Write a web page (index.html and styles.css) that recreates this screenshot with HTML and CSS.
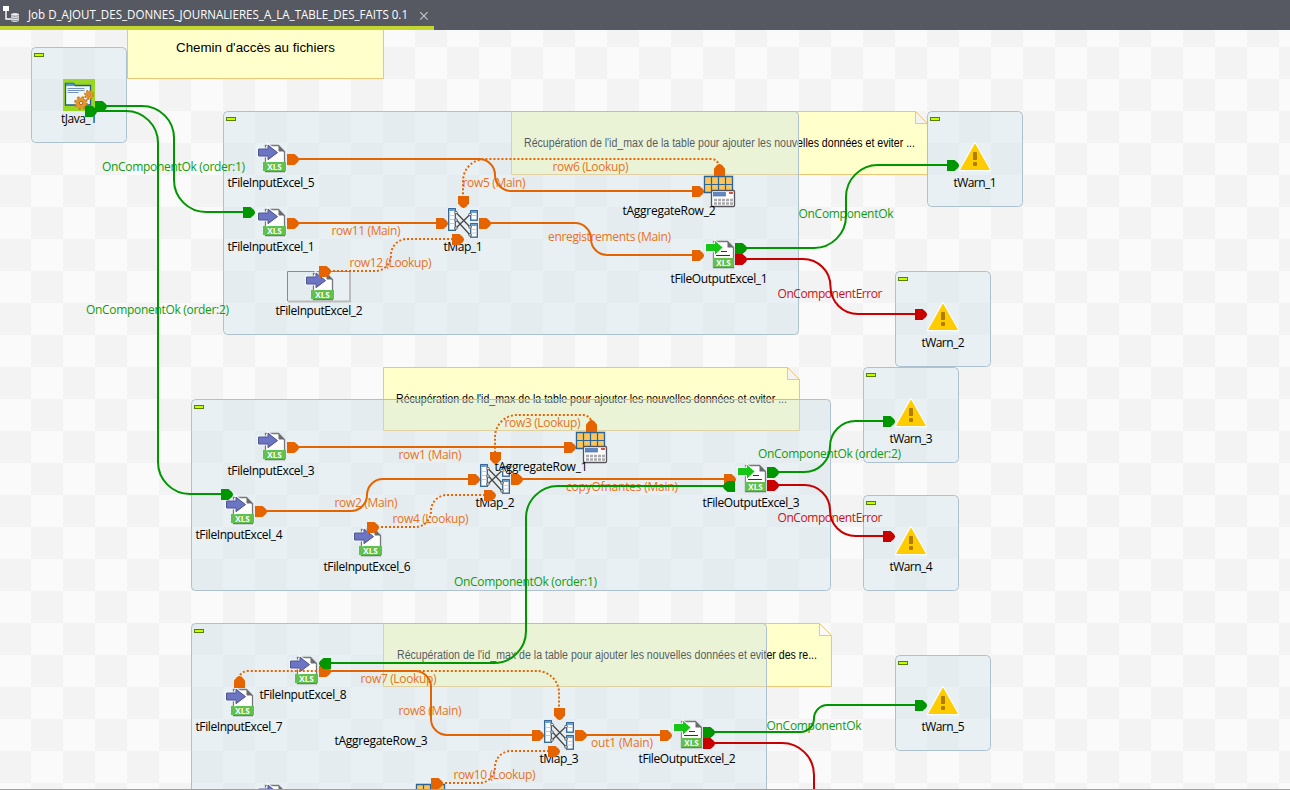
FILE: index.html
```html
<!DOCTYPE html>
<html lang="fr">
<head>
<meta charset="utf-8">
<title>Job D_AJOUT_DES_DONNES_JOURNALIERES_A_LA_TABLE_DES_FAITS 0.1</title>
<link rel="stylesheet" href="styles.css">
</head>
<body>
<header class="tabs">
  <div class="tab">
    <svg class="tab-icon" width="16" height="18" viewBox="0 0 16 18">
      <rect x="0" y="1" width="6" height="5" fill="#fff"/>
      <path d="M3 5v9h5" fill="none" stroke="#fff" stroke-width="1.4"/>
      <path d="M8 9q4-2 8 0v7q-4 2-8 0z" fill="#e8e8e8"/>
      <path d="M8 10.7q4 1.200 8 0M8 12.900q4 1.200 8 0M8 15.100q4 1.200 8 0" fill="none" stroke="#777a82" stroke-width=".8"/>
    </svg>
    <svg class="tab-title" width="386" height="26"><text x="0" y="19" textLength="380" lengthAdjust="spacingAndGlyphs">Job D_AJOUT_DES_DONNES_JOURNALIERES_A_LA_TABLE_DES_FAITS 0.1</text></svg>
    <svg class="tab-close" width="10" height="10" viewBox="0 0 10 10"><path d="M1.200 1.200l7.400 7.400M8.600 1.200L1.200 8.600" fill="none" stroke="#c8c9cc" stroke-width="1.100"/></svg>
  </div>
</header>
<main class="designer">
<svg class="canvas" width="1290" height="760" viewBox="0 30 1290 760">
  <defs>
    <pattern id="checker" x="-1" y="15" width="64" height="64" patternUnits="userSpaceOnUse">
      <rect width="64" height="64" fill="#fafafa"/>
      <path d="M32 0h32v32H32zM0 32h32v32H0z" fill="#f3f3f3"/>
    </pattern>
    <path id="plug" d="M-6-5.500H1.500L5 -2.500L6 -.5V.5L5 2.500L1.500 5.500H-6z"/>
    <g id="toggle"><rect x="3" y="6" width="9" height="3" fill="#bfff00" stroke="#5d7d00"/></g>
    <g id="xls-in">
      <path d="M10.500 2.500h13l6 6v20h-19z" fill="#fff" stroke="#77787a" stroke-width="1.300"/>
      <path d="M23.500 2.500v6h6z" fill="#6a6b6e"/>
      <rect x="8" y="19" width="23" height="9" fill="#62c14e"/>
      <text x="19.500" y="26.600" class="badge">XLS</text>
      <path d="M3.500 6h9.500V1.800L22.800 9.600L13 17.200V13H3.500z" fill="#6c75c2" stroke="#fff" stroke-width="3" stroke-opacity=".7"/>
      <path d="M3.500 6h9.500V2.300L22.500 9.600L13 16.700V13H3.500z" fill="#6c75c2" stroke="#4c5499"/>
    </g>
    <g id="xls-out">
      <path d="M10.500 2.500h14l6 6v20h-20z" fill="#fff" stroke="#77787a" stroke-width="1.300"/>
      <path d="M24.500 2.500v6h6z" fill="#6a6b6e"/>
      <path d="M18 12.500h6M13 16.500h14" stroke="#333" stroke-width="1.100"/>
      <rect x="10" y="19" width="21" height="9" fill="#62c14e"/>
      <text x="20.500" y="26.600" class="badge">XLS</text>
      <path d="M3 5h9V2L19.500 8.500L12 15.500V12H3z" fill="#16c516" stroke="#fff" stroke-width="2.500" stroke-opacity=".7"/>
      <path d="M3 5h9V2L19.500 8.500L12 15.500V12H3z" fill="#16c516"/>
    </g>
    <g id="tmap">
      <g fill="#fff" stroke="#2c6496" stroke-width="1.300">
        <rect x="1.700" y="1.700" width="6.600" height="21.600"/>
        <rect x="23.700" y="3.700" width="6.600" height="9.500"/>
        <rect x="23.700" y="16.700" width="6.600" height="13.500"/>
      </g>
      <path d="M2 3h6M24 5h6M24 18h6" stroke="#6e9fcc" stroke-width="2"/>
      <path d="M2.500 8.500h5M2.500 12.500h5M2.500 16.500h5M24.500 8.500h5M24.500 22.500h5M24.500 26h5" stroke="#c5cbd2"/>
      <path d="M9 5.500L23 20M9 12.500L23 28M9 21L23 7.500" fill="none" stroke="#444" stroke-width="1.200"/>
      <g fill="#fff" stroke="#555" stroke-width=".9"><circle cx="9" cy="5.500" r="1.300"/><circle cx="9" cy="13" r="1.300"/><circle cx="9" cy="21" r="1.300"/><circle cx="23" cy="7.500" r="1.300"/><circle cx="23" cy="20" r="1.300"/><circle cx="23" cy="28" r="1.300"/></g>
    </g>
    <g id="aggregate">
      <path d="M1.500 1.500h28v16h-28z" fill="#fac55d" stroke="#2c6496" stroke-width="1.300"/>
      <path d="M8.500 1.500v16M15.500 1.500v16M22.500 1.500v16M1.500 9.500h28" stroke="#2c6496" stroke-width="1.200"/>
      <rect x="8.500" y="15.500" width="23" height="16" rx="1" fill="#fff" stroke="#54545c" stroke-width="1.300"/>
      <rect x="10.500" y="17.500" width="12" height="3.500" fill="#6189c8" stroke="#466ca8" stroke-width=".7"/>
      <rect x="26" y="17" width="4" height="2" fill="#df5040"/>
      <path d="M11 25h19M11 28.500h19" stroke="#a9a9ad" stroke-width="2.400" stroke-dasharray="3 1"/>
    </g>
    <g id="warn">
      <path d="M16-.3L31.500 27.500H.5z" fill="#ffcc00" stroke="#fff" stroke-width="1.500" stroke-linejoin="round"/>
      <path d="M16 .5L31 27H1z" fill="#ffcc00"/>
      <rect x="14" y="9" width="4" height="8" rx=".5" fill="#b27c00"/><rect x="14" y="19" width="4" height="4" rx="1" fill="#b27c00"/>
    </g>
    <g id="tjava">
      <rect width="32" height="32" fill="#98d825"/>
      <path d="M2.500 6V4.500h8L12 6.500h15.500V26h-25z" fill="#edf7fa" stroke="#285c86" stroke-width="1.300"/>
      <path d="M3 4.500h7.500L12 7H3z" fill="#4d9bd0"/>
      <path d="M4.500 9.500h17M4.500 11.500h17M4.500 13.500h11" stroke="#7794c1"/>
      <circle cx="18" cy="24" r="5.400" fill="#e2962e" stroke="#c67a20" stroke-width="3" stroke-dasharray="2.200 2.040"/>
      <circle cx="18" cy="24" r="5.300" fill="#e2962e"/><circle cx="18" cy="24" r="1.600" fill="#edf7fa" stroke="#b16a18"/>
      <circle cx="26" cy="16" r="3.800" fill="#e2962e" stroke="#c67a20" stroke-width="2.400" stroke-dasharray="1.700 1.284"/>
      <circle cx="26" cy="16" r="3.700" fill="#e2962e"/><circle cx="26" cy="16" r="1.100" fill="#edf7fa" stroke="#b16a18" stroke-width=".8"/>
    </g>
  </defs>

  <rect y="30" width="1290" height="760" fill="url(#checker)"/>

  <g class="notes">
    <path d="M127.500 20V78.500H383.500V20z"/>
    <path d="M511.500 111.500H915.500L927.500 123.500V174.500H511.500zM915.500 111.500V123.500H927.500"/>
    <path d="M383.500 367.500H787.500L799.500 379.500V430.500H383.500zM787.500 367.500V379.500H799.500"/>
    <path d="M383.500 623.500H819.500L831.500 635.500V686.500H383.500zM819.500 623.500V635.500H831.500"/>
  </g>
  <g class="note-text">
    <text class="big" x="176" y="52" textLength="159" lengthAdjust="spacingAndGlyphs">Chemin d'accès au fichiers</text>
    <text x="524" y="147" textLength="391" lengthAdjust="spacingAndGlyphs">Récupération de l'id_max de la table pour ajouter les nouvelles données et eviter ...</text>
    <text x="396" y="403" textLength="391" lengthAdjust="spacingAndGlyphs">Récupération de l'id_max de la table pour ajouter les nouvelles données et eviter ...</text>
    <text x="397" y="659" textLength="420" lengthAdjust="spacingAndGlyphs">Récupération de l'id_max de la table pour ajouter les nouvelles données et eviter des re...</text>
  </g>

  <g class="groups">
    <rect x="31.500" y="47.500" width="95" height="95" rx="4"/>
    <rect x="223.500" y="111.500" width="575" height="223" rx="4"/>
    <rect x="927.500" y="111.500" width="95" height="95" rx="4"/>
    <rect x="895.500" y="271.500" width="95" height="95" rx="4"/>
    <rect x="863.500" y="367.500" width="95" height="95" rx="4"/>
    <rect x="191.500" y="399.500" width="639" height="191" rx="4"/>
    <rect x="863.500" y="495.500" width="95" height="95" rx="4"/>
    <rect x="191.500" y="623.500" width="575" height="223" rx="4"/>
    <rect x="895.500" y="655.500" width="95" height="95" rx="4"/>
  </g>
  <use href="#toggle" x="31.500" y="47.500"/><use href="#toggle" x="223.500" y="111.500"/><use href="#toggle" x="927.500" y="111.500"/>
  <use href="#toggle" x="895.500" y="271.500"/><use href="#toggle" x="863.500" y="367.500"/><use href="#toggle" x="191.500" y="399.500"/>
  <use href="#toggle" x="863.500" y="495.500"/><use href="#toggle" x="191.500" y="623.500"/><use href="#toggle" x="895.500" y="655.500"/>

  <path d="M287.500 301V271.500H350" fill="none" stroke="#8b8b8b"/>
  <path d="M288 301.500H350V272" fill="none" stroke="#bcbcbc" stroke-width="2"/>

  <use href="#tjava" x="63" y="79"/>
  <use href="#xls-in" x="255" y="143"/><use href="#xls-in" x="255" y="207"/><use href="#xls-in" x="303" y="271"/>
  <use href="#xls-in" x="255" y="431"/><use href="#xls-in" x="223" y="495"/><use href="#xls-in" x="351" y="527"/>
  <use href="#xls-in" x="223" y="687"/><use href="#xls-in" x="287" y="655"/><use href="#xls-in" x="255" y="783"/>
  <use href="#xls-out" x="703" y="239"/><use href="#xls-out" x="735" y="463"/><use href="#xls-out" x="671" y="719"/>
  <use href="#tmap" x="447" y="207"/><use href="#tmap" x="479" y="463"/><use href="#tmap" x="543" y="719"/>
  <use href="#aggregate" x="703" y="175"/><use href="#aggregate" x="575" y="431"/><use href="#aggregate" x="415" y="783"/>
  <use href="#warn" x="959" y="143"/><use href="#warn" x="927" y="303"/><use href="#warn" x="895" y="399"/><use href="#warn" x="895" y="527"/><use href="#warn" x="927" y="687"/>

  <g class="labels">
    <text x="61" y="123" textLength="36">tJava_1</text>
    <text x="227.500" y="187" textLength="87">tFileInputExcel_5</text>
    <text x="227.500" y="251" textLength="87">tFileInputExcel_1</text>
    <text x="275.500" y="315" textLength="87">tFileInputExcel_2</text>
    <text x="443.500" y="251" textLength="39">tMap_1</text>
    <text x="622.500" y="215" textLength="93">tAggregateRow_2</text>
    <text x="670.500" y="283" textLength="97">tFileOutputExcel_1</text>
    <text x="953.500" y="187" textLength="43">tWarn_1</text>
    <text x="921.500" y="347" textLength="43">tWarn_2</text>
    <text x="227.500" y="475" textLength="87">tFileInputExcel_3</text>
    <text x="195.500" y="539" textLength="87">tFileInputExcel_4</text>
    <text x="323.500" y="571" textLength="87">tFileInputExcel_6</text>
    <text x="475.500" y="507" textLength="39">tMap_2</text>
    <text x="494.500" y="471" textLength="93">tAggregateRow_1</text>
    <text x="702.500" y="507" textLength="97">tFileOutputExcel_3</text>
    <text x="889.500" y="443" textLength="43">tWarn_3</text>
    <text x="889.500" y="571" textLength="43">tWarn_4</text>
    <text x="259.500" y="699" textLength="87">tFileInputExcel_8</text>
    <text x="195.500" y="731" textLength="87">tFileInputExcel_7</text>
    <text x="334.500" y="745" textLength="93">tAggregateRow_3</text>
    <text x="539.500" y="763" textLength="39">tMap_3</text>
    <text x="638.500" y="763" textLength="97">tFileOutputExcel_2</text>
    <text x="921.500" y="731" textLength="43">tWarn_5</text>
  </g>

  <g class="labels row">
    <text x="331.500" y="235" textLength="69">row11 (Main)</text>
    <text x="349.500" y="267" textLength="82">row12 (Lookup)</text>
    <text x="462.500" y="187" textLength="63">row5 (Main)</text>
    <text x="552.500" y="171" textLength="76">row6 (Lookup)</text>
    <text x="548" y="241" textLength="123">enregistrements (Main)</text>
    <text x="398.500" y="459" textLength="63">row1 (Main)</text>
    <text x="334.500" y="507" textLength="63">row2 (Main)</text>
    <text x="392.500" y="523" textLength="76">row4 (Lookup)</text>
    <text x="504.500" y="427" textLength="76">row3 (Lookup)</text>
    <text x="566" y="491" textLength="112">copyOfnantes (Main)</text>
    <text x="360.500" y="683" textLength="76">row7 (Lookup)</text>
    <text x="398.500" y="715" textLength="63">row8 (Main)</text>
    <text x="453.500" y="779" textLength="82">row10 (Lookup)</text>
    <text x="591" y="747" textLength="62">out1 (Main)</text>
  </g>
  <g class="labels ok">
    <text x="102" y="171" textLength="143">OnComponentOk (order:1)</text>
    <text x="86" y="314" textLength="143">OnComponentOk (order:2)</text>
    <text x="798.500" y="218" textLength="95">OnComponentOk</text>
    <text x="758" y="458" textLength="143">OnComponentOk (order:2)</text>
    <text x="454" y="586" textLength="143">OnComponentOk (order:1)</text>
    <text x="766.500" y="730" textLength="95">OnComponentOk</text>
  </g>
  <g class="labels error">
    <text x="777.500" y="298" textLength="105">OnComponentError</text>
    <text x="777.500" y="522" textLength="105">OnComponentError</text>
  </g>

  <g class="link row">
    <path d="M293 159H479A16 16 0 0 1 495 175A16 16 0 0 0 511 191H698"/>
    <path d="M293 223H442"/>
    <path d="M485 223H575A16 16 0 0 1 591 239A16 16 0 0 0 607 255H698"/>
    <path d="M293 447H570"/>
    <path d="M261 511H351A16 16 0 0 0 367 495A16 16 0 0 1 383 479H474"/>
    <path d="M517 479H730"/>
    <path d="M325 671H415A16 16 0 0 1 431 687V719A16 16 0 0 0 447 735H538"/>
    <path d="M581 735H666"/>
    <g class="lookup">
      <path d="M718 163Q716 159 711 159H485A22 22 0 0 0 463 181V198"/>
      <path d="M325 271H375A16 16 0 0 0 391 255A16 16 0 0 1 407 239H458"/>
      <path d="M591 420Q588 415 583 415H517A22 22 0 0 0 495 437V454"/>
      <path d="M373 527H415A16 16 0 0 0 431 511A16 16 0 0 1 447 495H490"/>
      <path d="M240 675Q243 671 248 671H537A22 22 0 0 1 559 693V710"/>
      <path d="M437 783H479A16 16 0 0 0 495 767A16 16 0 0 1 511 751H554"/>
    </g>
  </g>
  <g class="plugs row">
    <use href="#plug" x="293" y="159.500"/><use href="#plug" x="698" y="191.500"/>
    <use href="#plug" x="293" y="223.500"/><use href="#plug" x="442" y="223.500"/><use href="#plug" x="485" y="223.500"/>
    <use href="#plug" x="698" y="255.500"/><use href="#plug" x="325" y="271.500"/><use href="#plug" x="458" y="239.500"/>
    <use href="#plug" x="293" y="447.500"/><use href="#plug" x="570" y="447.500"/><use href="#plug" x="261" y="511.500"/>
    <use href="#plug" x="474" y="479.500"/><use href="#plug" x="373" y="527.500"/><use href="#plug" x="490" y="495.500"/>
    <use href="#plug" x="517" y="479.500"/><use href="#plug" x="730" y="479.500"/>
    <use href="#plug" x="325" y="671.500"/><use href="#plug" x="538" y="735.500"/><use href="#plug" x="581" y="735.500"/>
    <use href="#plug" x="666" y="735.500"/><use href="#plug" x="554" y="751.500"/><use href="#plug" x="437" y="783.500"/>
    <use href="#plug" transform="translate(719.500 170) rotate(-90)"/><use href="#plug" transform="translate(591.500 426) rotate(-90)"/><use href="#plug" transform="translate(239.500 682) rotate(-90)"/>
    <use href="#plug" transform="translate(463.500 202) rotate(90)"/><use href="#plug" transform="translate(495.500 458) rotate(90)"/><use href="#plug" transform="translate(559.500 714) rotate(90)"/>
  </g>

  <g class="link ok">
    <path d="M101 106H142A32 32 0 0 1 174 138V180A32 32 0 0 0 206 212H249"/>
    <path d="M91 111H126A32 32 0 0 1 158 143V462A32 32 0 0 0 190 494H227"/>
    <path d="M741 248H814A32 32 0 0 0 846 216V197A32 32 0 0 1 878 165H953"/>
    <path d="M773 472H804.500A25.500 25.500 0 0 0 830 446.500A25.500 25.500 0 0 1 855.500 421H889"/>
    <path d="M729 486H558A32 32 0 0 0 526 518V631A32 32 0 0 1 494 663H325"/>
    <path d="M709 732H800.500A13.500 13.500 0 0 0 814 718.500A13.500 13.500 0 0 1 827.500 705H921"/>
  </g>
  <g class="plugs ok">
    <use href="#plug" x="101" y="106.500"/><use href="#plug" x="91" y="111.500"/><use href="#plug" x="249" y="212.500"/><use href="#plug" x="227" y="494.500"/>
    <use href="#plug" x="741" y="248.500"/><use href="#plug" x="953" y="165.500"/><use href="#plug" x="773" y="472.500"/><use href="#plug" x="889" y="421.500"/>
    <use href="#plug" x="709" y="732.500"/><use href="#plug" x="921" y="705.500"/>
    <use href="#plug" transform="translate(729 486.500) rotate(180)"/><use href="#plug" transform="translate(325 663.500) rotate(180)"/>
  </g>
  <g class="link error">
    <path d="M741 259H803A27.500 27.500 0 0 1 830.500 286.500A27.500 27.500 0 0 0 858 314H921"/>
    <path d="M773 485H804.500A25.500 25.500 0 0 1 830 510.500A25.500 25.500 0 0 0 855.500 536H889"/>
    <path d="M709 743H782A32 32 0 0 1 814 775V790"/>
  </g>
  <g class="plugs error">
    <use href="#plug" x="741" y="259.500"/><use href="#plug" x="921" y="314.500"/><use href="#plug" x="773" y="485.500"/><use href="#plug" x="889" y="536.500"/><use href="#plug" x="709" y="743.500"/>
  </g>
  <path d="M0 789.500H1290" stroke="#a0a0a0"/>
</svg>
</main>
</body>
</html>
```
FILE: styles.css
```css
body {
  margin: 0;
  width: 1290px;
  height: 790px;
  overflow: hidden;
  display: flex;
  flex-direction: column;
  font-family: "Open Sans", "Noto Sans", sans-serif;
  font-size: 12px;
}
.tabs {
  display: flex;
  height: 30px;
  background: #565962;
}
.tab {
  box-sizing: border-box;
  display: flex;
  align-items: flex-start;
  width: 434px;
  height: 30px;
  padding-left: 3px;
  border-bottom: 4px solid #c3d62e;
}
.tab-icon { margin: 5px 9px 0 0; }
.tab-title { fill: #fff; overflow: visible; }
.tab-close { margin: 11px 0 0 5px; }
.designer { flex: 1; min-height: 0; }
.canvas { display: block; }

.notes path { fill: #ffffcc; stroke: #edc676; }
.note-text {
  font-family: "Liberation Sans", sans-serif;
  font-size: 12px;
  fill: #000;
}
.note-text .big { font-size: 13.6px; }
.groups rect { fill: rgba(205, 224, 233, 0.4); stroke: #adc2ce; }
.badge {
  font-size: 8px;
  font-weight: 700;
  text-anchor: middle;
  fill: #fff;
}
.labels { fill: #000; }

.link { fill: none; stroke-width: 2; }
.link.row { stroke: #e66400; }
.link.ok { stroke: #009600; }
.link.error { stroke: #c80000; }
.link .lookup { stroke-dasharray: 2 2; }
.plugs.row { fill: #e66400; }
.labels.row { fill: #e87222; }
.plugs.ok { fill: #009600; }
.labels.ok { fill: #109c10; }
.plugs.error { fill: #c80000; }
.labels.error { fill: #cc1010; }
```
